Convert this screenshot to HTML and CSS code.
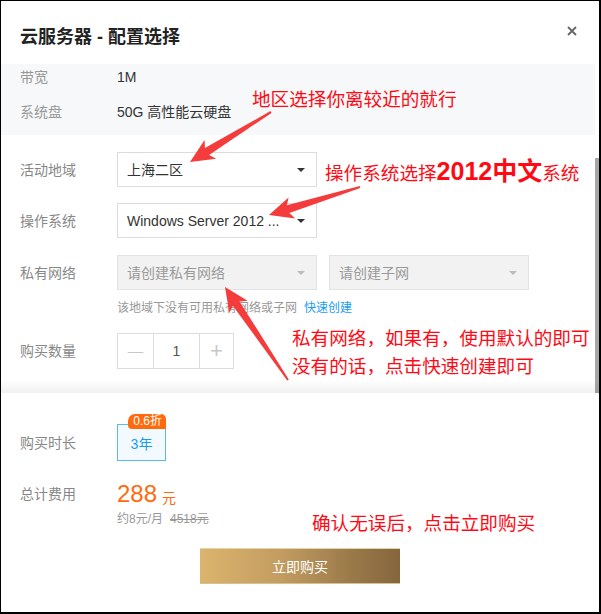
FILE: index.html
```html
<!DOCTYPE html>
<html lang="zh-CN">
<head>
<meta charset="utf-8">
<title>云服务器 - 配置选择</title>
<link rel="stylesheet" href="styles.css">
</head>
<body>
<div class="frame">
  <div class="header">
    <h1 class="title">云服务器 - 配置选择</h1>
    <button class="close" aria-label="关闭">
      <svg width="10" height="10" viewBox="0 0 10 10"><path d="M1 1L9 9M9 1L1 9" stroke="#666" stroke-width="1.8" fill="none"/></svg>
    </button>
  </div>

  <div class="scroll">
    <div class="scroll-content">
      <div class="info">
        <div class="info-row"><span class="info-label">带宽</span><span class="info-value">1M</span></div>
        <div class="info-row"><span class="info-label">系统盘</span><span class="info-value">50G 高性能云硬盘</span></div>
      </div>

      <div class="form">
        <div class="row">
          <span class="label">活动地域</span>
          <div class="select"><span class="select-text">上海二区</span><i class="caret"></i></div>
        </div>
        <div class="row row-gap">
          <span class="label">操作系统</span>
          <div class="select"><span class="select-text">Windows Server 2012 ...</span><i class="caret"></i></div>
        </div>
        <div class="row row-gap2">
          <span class="label">私有网络</span>
          <div class="selects">
            <div class="select disabled"><span class="select-text">请创建私有网络</span><i class="caret"></i></div>
            <div class="select disabled"><span class="select-text">请创建子网</span><i class="caret"></i></div>
          </div>
        </div>
        <div class="hint">该地域下没有可用私有网络或子网<a class="link">快速创建</a></div>
        <div class="row row-step">
          <span class="label">购买数量</span>
          <div class="stepper">
            <span class="step-btn minus">—</span>
            <span class="step-val">1</span>
            <span class="step-btn plus">+</span>
          </div>
        </div>
      </div>
    </div>
    <div class="scrollbar"><div class="thumb"></div></div>
    <div class="fade"></div>
  </div>

  <div class="footer">
    <div class="row">
      <span class="label">购买时长</span>
      <div class="option">3年<span class="badge">0.6折</span></div>
    </div>
    <div class="row row-price">
      <span class="label label-price">总计费用</span>
      <div class="price">
        <div class="price-main"><span class="amount">288</span><span class="unit">元</span></div>
        <div class="price-sub">约8元/月<s class="orig">4518元</s></div>
      </div>
    </div>
    <button class="buy">立即购买</button>
  </div>

  <div class="notes">
    <svg class="arrows" width="601" height="614" viewBox="0 0 601 614">
      <polygon fill="#f43c3c" points="190,162 216.2,158.8 209.1,154.9 271.5,112.9 270.5,111.1 204.9,148.1 204.6,140"/>
      <polygon fill="#f43c3c" points="269,215 295.2,218.4 289.3,212.9 360.3,188 359.7,186 286.9,205.3 288.6,197.4"/>
      <polygon fill="#f43c3c" points="225,287 247.6,300.7 239.5,301.4 288.8,379.4 287.2,380.6 232.9,305.8 229.4,313.1"/>
    </svg>
    <p class="note note-1">地区选择你离较近的就行</p>
    <p class="note note-2">操作系统选择<b class="big">2012中文</b>系统</p>
    <p class="note note-3a">私有网络，如果有，使用默认的即可</p>
    <p class="note note-3b">没有的话，点击快速创建即可</p>
    <p class="note note-4">确认无误后，点击立即购买</p>
  </div>
</div>
</body>
</html>
```

FILE: styles.css
```css
* { box-sizing: border-box; }
html, body { margin: 0; padding: 0; background: #fff; }
body {
  font-family: "Liberation Sans", "Noto Sans CJK SC", sans-serif;
  font-size: 14px;
  color: #333;
}
.frame {
  position: relative;
  width: 601px;
  height: 614px;
  border-style: solid;
  border-color: #000;
  border-width: 1px 2px 2px 1px;
  display: flex;
  flex-direction: column;
  overflow: hidden;
  background: #fff;
}
.header {
  height: 63px;
  flex: none;
  display: flex;
  justify-content: space-between;
  align-items: flex-start;
  padding: 0 22px 0 19px;
}
.title {
  margin: 24px 0 0;
  font-size: 18px;
  line-height: 24px;
  font-weight: bold;
  color: #222;
}
.close {
  margin-top: 25px;
  padding: 0;
  border: 0;
  background: none;
  width: 10px;
  height: 10px;
  display: flex;
}
.scroll {
  position: relative;
  height: 329px;
  flex: none;
  display: flex;
}
.scroll-content { flex: 1; }
.scrollbar { width: 4px; flex: none; display: flex; flex-direction: column; }
.thumb { margin-top: 94px; flex: 1; background: #a6a6a6; }
.fade {
  position: absolute;
  left: 0; right: 0; bottom: 0;
  height: 13px;
  background: linear-gradient(to bottom, rgba(0,0,0,0), rgba(0,0,0,0.055));
}
.info {
  background: #f7f8fa;
  padding: 3px 0 13px 19px;
  display: flex;
  flex-direction: column;
  gap: 15px;
}
.info-row { display: flex; line-height: 20px; }
.info-label { width: 97px; color: #999; }
.info-value { color: #333; }
.form { padding: 17px 0 0 19px; }
.row { display: flex; align-items: center; }
.label { width: 97px; flex: none; color: #888; line-height: 20px; }
.row-gap { margin-top: 16px; }
.row-gap2 { margin-top: 17px; }
.row-step { margin-top: 16px; }
.selects { display: flex; gap: 12px; }
.select {
  width: 200px;
  height: 35px;
  border: 1px solid #dcdcdc;
  background: #fff;
  display: flex;
  align-items: center;
  justify-content: space-between;
  padding: 1px 11px 0 9px;
}
.select-text { color: #333; line-height: 20px; }
.caret {
  width: 0; height: 0;
  border-left: 4px solid transparent;
  border-right: 4px solid transparent;
  border-top: 4px solid #333;
}
.select.disabled { background: #f2f2f2; border-color: #e2e2e2; }
.select.disabled .select-text { color: #999; }
.select.disabled .caret { border-top-color: #bbb; }
.hint {
  margin: 9px 0 0 97px;
  font-size: 12px;
  line-height: 18px;
  color: #999;
}
.link { color: #1a9cf0; margin-left: 7px; }
.stepper {
  display: flex;
  height: 36px;
  border: 1px solid #dcdcdc;
}
.step-btn {
  width: 35px;
  display: flex;
  align-items: center;
  justify-content: center;
  color: #c8c8c8;
  font-size: 18px;
}
.minus { font-size: 14px; transform: scaleX(1.1); }
.plus { width: 33px; font-size: 22px; font-weight: 300; }
.step-val {
  width: 47px;
  border-left: 1px solid #dcdcdc;
  border-right: 1px solid #dcdcdc;
  display: flex;
  align-items: center;
  justify-content: center;
  color: #555;
}
.footer {
  flex: 1;
  padding: 31px 0 0 19px;
  display: flex;
  flex-direction: column;
}
.option {
  position: relative;
  width: 49px;
  height: 37px;
  border: 1px solid #5ab9f2;
  background: #f3faff;
  color: #1a9cf0;
  display: flex;
  align-items: center;
  justify-content: center;
  padding-top: 1px;
}
.badge {
  position: absolute;
  right: -1px;
  top: -11px;
  height: 15px;
  padding: 0 4px 0 5px;
  background: #ff6a0d;
  color: #fff;
  font-size: 12px;
  line-height: 15px;
  border-radius: 7px 5px 0 4px;
}
.row-price { margin-top: 18px; align-items: flex-start; }
.label-price { line-height: 30px; }
.price-main { height: 30px; display: flex; align-items: center; }
.amount { font-size: 24px; color: #ff6a0d; line-height: 30px; }
.unit { font-size: 14px; color: #ff6a0d; margin-left: 5px; margin-top: 5px; }
.price-sub { margin-top: 1px; font-size: 12px; line-height: 18px; color: #999; }
.orig { margin-left: 7px; }
.buy {
  margin: 20px 0 0 180px;
  width: 200px;
  height: 36px;
  border: 0;
  border-top: 1px solid #e7d3ab;
  border-bottom: 1px solid #d6c09a;
  background: linear-gradient(to right, #dbb46d, #c39d61 40%, #9b7a4a 75%, #85663c);
  color: #fff;
  font-family: "Noto Sans CJK SC", sans-serif;
  font-size: 14px;
  padding: 0;
}
.notes { position: absolute; left: 0; top: 0; right: 0; bottom: 0; pointer-events: none; }
.arrows { position: absolute; left: -1px; top: -1px; }
.note {
  position: absolute;
  margin: 0;
  color: #ff0a14;
  font-family: "Noto Sans CJK SC", sans-serif;
  font-size: 18.6px;
  line-height: 22px;
  white-space: nowrap;
}
.note-1 { left: 251px; top: 86px; }
.note-2 { left: 324px; top: 157px; line-height: 26px; }
.big { font-family: "Liberation Sans", "Noto Sans CJK SC", sans-serif; font-size: 25px; font-weight: bold; }
.note-3a { left: 291px; top: 325px; }
.note-3b { left: 291px; top: 352.5px; }
.note-4 { left: 311px; top: 510px; }
```
